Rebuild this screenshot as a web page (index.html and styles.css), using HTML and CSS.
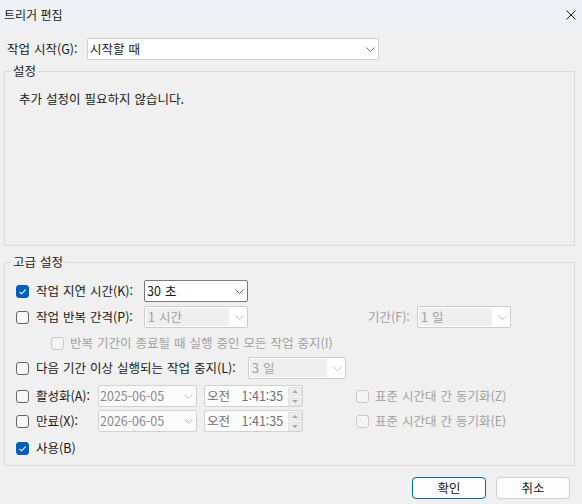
FILE: index.html
```html
<!DOCTYPE html>
<html lang="ko">
<head>
<meta charset="utf-8">
<title>트리거 편집</title>
<link rel="stylesheet" href="styles.css">
</head>
<body>
<div class="titlebar">
  <span class="title">트리거 편집</span>
  <svg class="close" width="10" height="10" viewBox="0 0 10 10"><path d="M0.5 0.5 L9.5 9.5 M9.5 0.5 L0.5 9.5" stroke="#1a1a1a" stroke-width="1" fill="none"/></svg>
</div>
<div class="content">
  <div class="start-row">
    <span class="start-label">작업 시작(G):</span>
    <div class="combo combo-start">
      <span class="field">시작할 때</span>
      <span class="arrow"><svg width="9" height="5" viewBox="0 0 9 5"><path d="M0.5 0.5 L4.5 4.5 L8.5 0.5" fill="none" stroke="currentColor"/></svg></span>
    </div>
  </div>

  <fieldset class="group">
    <legend>설정</legend>
    <div class="settings-body">추가 설정이 필요하지 않습니다.</div>
  </fieldset>

  <fieldset class="group group-adv">
    <legend>고급 설정</legend>
    <div class="adv-body">
      <div class="row r1">
        <span class="cb checked"><svg width="13" height="13" viewBox="0 0 13 13"><path d="M3.5 6.8 L5.6 8.8 L9.6 4.6" fill="none" stroke="#fff" stroke-width="1.1"/></svg></span>
        <span class="lbl w-108">작업 지연 시간(K):</span>
        <div class="combo combo-focus w-104">
          <span class="field">30 초</span>
          <span class="arrow"><svg width="9" height="5" viewBox="0 0 9 5"><path d="M0.5 0.5 L4.5 4.5 L8.5 0.5" fill="none" stroke="currentColor"/></svg></span>
        </div>
      </div>
      <div class="row r2">
        <span class="cb"></span>
        <span class="lbl w-108">작업 반복 간격(P):</span>
        <div class="combo disabled w-104">
          <span class="field">1 시간</span>
          <span class="arrow"><svg width="9" height="5" viewBox="0 0 9 5"><path d="M0.5 0.5 L4.5 4.5 L8.5 0.5" fill="none" stroke="currentColor"/></svg></span>
        </div>
        <span class="lbl dim period-label">기간(F):</span>
        <div class="combo disabled w-94">
          <span class="field">1 일</span>
          <span class="arrow"><svg width="9" height="5" viewBox="0 0 9 5"><path d="M0.5 0.5 L4.5 4.5 L8.5 0.5" fill="none" stroke="currentColor"/></svg></span>
        </div>
      </div>
      <div class="row r3">
        <span class="cb cb-disabled"></span>
        <span class="lbl dim">반복 기간이 종료될 때 실행 중인 모든 작업 중지(I)</span>
      </div>
      <div class="row r4">
        <span class="cb"></span>
        <span class="lbl w-212">다음 기간 이상 실행되는 작업 중지(L):</span>
        <div class="combo disabled w-98">
          <span class="field">3 일</span>
          <span class="arrow"><svg width="9" height="5" viewBox="0 0 9 5"><path d="M0.5 0.5 L4.5 4.5 L8.5 0.5" fill="none" stroke="currentColor"/></svg></span>
        </div>
      </div>
      <div class="row r5">
        <span class="cb"></span>
        <span class="lbl w-62">활성화(A):</span>
        <div class="picker date">
          <span class="field">2025-06-05</span>
          <span class="arrow"><svg width="9" height="5" viewBox="0 0 9 5"><path d="M0.5 0.5 L4.5 4.5 L8.5 0.5" fill="none" stroke="currentColor"/></svg></span>
        </div>
        <div class="picker time">
          <span class="ampm">오전</span><span class="clock">1:41:35</span>
          <span class="spin"><span class="spin-btn"><i class="tri-up"></i></span><span class="spin-btn"><i class="tri-down"></i></span></span>
        </div>
        <span class="cb cb-disabled sync-cb"></span>
        <span class="lbl dim">표준 시간대 간 동기화(Z)</span>
      </div>
      <div class="row r6">
        <span class="cb"></span>
        <span class="lbl w-62">만료(X):</span>
        <div class="picker date">
          <span class="field">2026-06-05</span>
          <span class="arrow"><svg width="9" height="5" viewBox="0 0 9 5"><path d="M0.5 0.5 L4.5 4.5 L8.5 0.5" fill="none" stroke="currentColor"/></svg></span>
        </div>
        <div class="picker time">
          <span class="ampm">오전</span><span class="clock">1:41:35</span>
          <span class="spin"><span class="spin-btn"><i class="tri-up"></i></span><span class="spin-btn"><i class="tri-down"></i></span></span>
        </div>
        <span class="cb cb-disabled sync-cb"></span>
        <span class="lbl dim">표준 시간대 간 동기화(E)</span>
      </div>
      <div class="row r7">
        <span class="cb checked"><svg width="13" height="13" viewBox="0 0 13 13"><path d="M3.5 6.8 L5.6 8.8 L9.6 4.6" fill="none" stroke="#fff" stroke-width="1.1"/></svg></span>
        <span class="lbl">사용(B)</span>
      </div>
    </div>
  </fieldset>

  <div class="buttons">
    <button class="btn btn-default">확인</button>
    <button class="btn">취소</button>
  </div>
</div>
</body>
</html>
```

FILE: styles.css
```css
* { box-sizing: border-box; }
html, body { margin: 0; padding: 0; }
body {
  width: 582px;
  height: 504px;
  overflow: hidden;
  background: #f0f0f0;
  font-family: "Noto Sans CJK KR", "Noto Sans", sans-serif;
  font-size: 12.5px;
  line-height: 16px;
  word-spacing: 0.5px;
  color: #1a1a1a;
}

.titlebar {
  height: 30px;
  background: #eef2f7;
  display: flex;
  align-items: center;
  justify-content: space-between;
  padding: 0 6px 0 4px;
}
.title { font-size: 12px; word-spacing: 0; }
.close { display: block; }

.content { padding: 8px 0 0 4px; }

.start-row {
  display: flex;
  align-items: center;
  height: 22px;
  padding-left: 3px;
}
.start-label { width: 80px; }

.combo {
  display: flex;
  align-items: stretch;
  height: 22px;
  background: #fff;
  border: 1px solid #cfcfcf;
  border-radius: 2px;
}
.combo .field {
  flex: 1;
  display: flex;
  align-items: center;
  padding-left: 2px;
  white-space: nowrap;
}
.combo .arrow, .picker .arrow {
  width: 18px;
  display: flex;
  align-items: center;
  justify-content: flex-end;
  padding-right: 3px;
  color: #666;
}
.arrow svg { display: block; }
.combo-start { width: 292px; }
.combo-focus { border-color: #7a7a7a; }
.combo.disabled { border-color: #cdcdcd; }
.combo.disabled .field {
  background: #efefef;
  margin: 1px 0 1px 1px;
  color: #a0a0a0;
}
.combo.disabled .arrow { color: #c4c4c4; }

.w-104 { width: 104px; }
.w-94 { width: 94px; }
.w-98 { width: 98px; }
.w-108 { width: 108px; }
.w-212 { width: 212px; }
.w-62 { width: 62px; }

.group {
  margin: 0;
  padding: 0;
  width: 571px;
  border: 1px solid #dadada;
  min-inline-size: 0;
}
.group legend {
  padding: 0 2px;
  margin-left: 6px;
  line-height: 16px;
}
.group:first-of-type { margin-top: 3px; }
.settings-body {
  height: 166px;
  padding: 12px 0 0 14px;
}
.group-adv { margin-top: 8px; }
.adv-body { padding: 10px 0 9px 11px; }

.row {
  display: flex;
  align-items: center;
  height: 22px;
  white-space: nowrap;
}
.r2 { margin-top: 4px; }
.r3 { margin-top: 7px; height: 16px; padding-left: 35px; }
.r3 .cb { margin-right: 6px; }
.r4 { margin-top: 6px; }
.r5 { margin-top: 6px; }
.r6 { margin-top: 3px; }
.r7 { margin-top: 8px; height: 16px; }

.cb {
  width: 13px;
  height: 13px;
  flex: none;
  border: 1px solid #666;
  border-radius: 3px;
  background: #f8f8f8;
  margin-right: 7px;
  position: relative;
}
.cb svg { position: absolute; left: -1px; top: -1px; }
.cb.checked { background: #005fb8; border-color: #005fb8; }
.cb.cb-disabled { border-color: #cacaca; background: #f4f4f4; }
.sync-cb { margin-left: 53px; margin-right: 6px; }

.dim { color: #a0a0a0; }
.period-label { margin-left: 120px; width: 49px; }

.picker {
  display: flex;
  align-items: stretch;
  width: 99px;
  height: 22px;
  background: #fbfbfb;
  border: 1px solid #d2d2d2;
  border-radius: 2px;
}
.picker.date .field {
  flex: 1;
  display: flex;
  align-items: center;
  padding-left: 1px;
  color: #8a8a8a;
}
.picker.date .arrow { color: #bdbdbd; }
.picker.time {
  margin-left: 7px;
  align-items: center;
  color: #707070;
  padding-left: 2px;
}
.ampm { width: 35px; }
.clock { width: 46px; }
.spin {
  display: flex;
  flex-direction: column;
  justify-content: center;
  gap: 1px;
  margin-left: 1px;
}
.spin-btn {
  width: 14px;
  height: 9px;
  background: #ececec;
  border: 1px solid #e2e2e2;
  display: flex;
  align-items: center;
  justify-content: center;
}
.tri-up, .tri-down {
  width: 0;
  height: 0;
  border-left: 3px solid transparent;
  border-right: 3px solid transparent;
}
.tri-up { border-bottom: 3px solid #a8a8a8; }
.tri-down { border-top: 3px solid #a8a8a8; }

.buttons {
  display: flex;
  justify-content: flex-end;
  gap: 10px;
  margin-top: 11px;
  padding-right: 12px;
}
.btn {
  width: 74px;
  height: 22px;
  padding: 0;
  background: #fdfdfd;
  border: 1px solid #d0d0d0;
  border-radius: 4px;
  font-family: inherit;
  font-size: 12.5px;
  line-height: 16px;
  color: #1a1a1a;
}
.btn-default { border-color: #0067c0; }
```
